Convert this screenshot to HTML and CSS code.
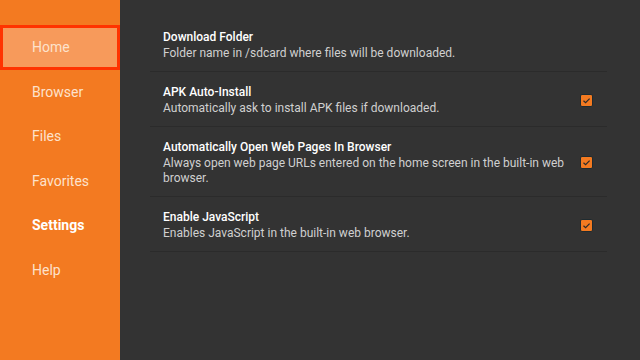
FILE: index.html
```html
<!DOCTYPE html>
<html>
    <head>
        <title>Settings</title>
        <link rel="stylesheet" href="styles.css">
    </head>
    <body>
        <div class="app">
            <nav class="sidebar">
                <div class="nav_item focused">Home</div>
                <div class="nav_item">Browser</div>
                <div class="nav_item">Files</div>
                <div class="nav_item">Favorites</div>
                <div class="nav_item active">Settings</div>
                <div class="nav_item">Help</div>
            </nav>
            <main class="settings">
                <div class="setting">
                    <div class="setting_text">
                        <div class="setting_title">Download Folder</div>
                        <div class="setting_desc">Folder name in /sdcard where files will be downloaded.</div>
                    </div>
                </div>
                <div class="setting">
                    <div class="setting_text">
                        <div class="setting_title">APK Auto-Install</div>
                        <div class="setting_desc">Automatically ask to install APK files if downloaded.</div>
                    </div>
                    <div class="check">
                        <svg viewBox="0 0 13 13" width="13" height="13"><path d="M3.5 6.8 L5.6 8.7 L9.6 4.6" fill="none" stroke="#2a2a2a" stroke-width="1.2"/></svg>
                    </div>
                </div>
                <div class="setting">
                    <div class="setting_text">
                        <div class="setting_title">Automatically Open Web Pages In Browser</div>
                        <div class="setting_desc">Always open web page URLs entered on the home screen in the built-in web browser.</div>
                    </div>
                    <div class="check">
                        <svg viewBox="0 0 13 13" width="13" height="13"><path d="M3.5 6.8 L5.6 8.7 L9.6 4.6" fill="none" stroke="#2a2a2a" stroke-width="1.2"/></svg>
                    </div>
                </div>
                <div class="setting">
                    <div class="setting_text">
                        <div class="setting_title">Enable JavaScript</div>
                        <div class="setting_desc">Enables JavaScript in the built-in web browser.</div>
                    </div>
                    <div class="check">
                        <svg viewBox="0 0 13 13" width="13" height="13"><path d="M3.5 6.8 L5.6 8.7 L9.6 4.6" fill="none" stroke="#2a2a2a" stroke-width="1.2"/></svg>
                    </div>
                </div>
            </main>
        </div>
    </body>
</html>
```

FILE: styles.css
```css
* {
    box-sizing: border-box;
}

body {
    margin: 0;
    font-family: Roboto, "Liberation Sans", sans-serif;
    background-color: #333;
}

.app {
    display: flex;
    width: 640px;
    height: 360px;
}

.sidebar {
    width: 120px;
    flex-shrink: 0;
    background-color: #f37a21;
    padding-top: 25px;
}

.nav_item {
    height: 44.5px;
    line-height: 44px;
    padding-left: 32px;
    font-size: 14px;
    color: #fde2cc;
}

.nav_item.focused {
    background-color: #f79a5b;
    border: 3px solid #ff3300;
    padding-left: 29px;
    line-height: 38px;
}

.nav_item.active {
    color: #fff;
    font-weight: bold;
}

.settings {
    flex: 1;
    padding: 17px 33px 0 30px;
}

.setting {
    display: flex;
    align-items: center;
    gap: 10px;
    padding: 12px 14px 10px 13px;
    border-bottom: 1px solid #2b2b2b;
}

.setting_text {
    flex: 1;
}

.setting_title {
    font-size: 12px;
    line-height: 17px;
    font-weight: 500;
    color: #fff;
}

.setting_desc {
    font-size: 12px;
    line-height: 15px;
    color: #d0d0d0;
}

.check {
    width: 13px;
    height: 13px;
    background-color: #f37a21;
    border: 1px solid #1f2b30;
    border-radius: 2px;
    display: flex;
}

.check svg {
    margin: -1px;
}
```
